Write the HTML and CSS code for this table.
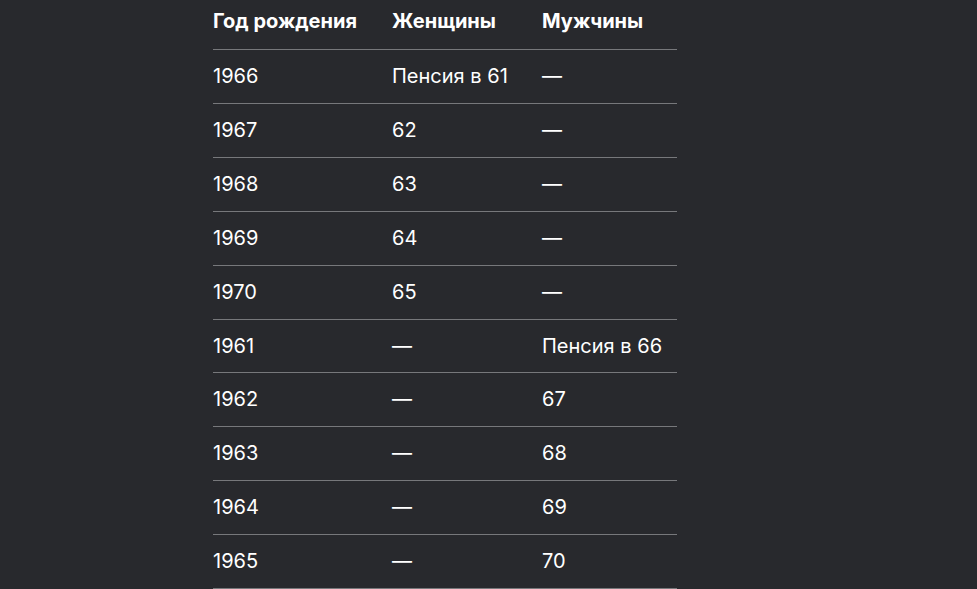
FILE: index.html
```html
<!DOCTYPE html>
<html lang="ru">
<head>
<meta charset="utf-8">
<link rel="stylesheet" href="styles.css">
</head>
<body>
<div class="wrap">
<table class="tbl">
<thead>
<tr><th class="c1">Год рождения</th><th class="c2">Женщины</th><th class="c3">Мужчины</th></tr>
</thead>
<tbody>
<tr><td>1966</td><td>Пенсия в 61</td><td>—</td></tr>
<tr><td>1967</td><td>62</td><td>—</td></tr>
<tr><td>1968</td><td>63</td><td>—</td></tr>
<tr><td>1969</td><td>64</td><td>—</td></tr>
<tr><td>1970</td><td>65</td><td>—</td></tr>
<tr><td>1961</td><td>—</td><td>Пенсия в 66</td></tr>
<tr><td>1962</td><td>—</td><td>67</td></tr>
<tr><td>1963</td><td>—</td><td>68</td></tr>
<tr><td>1964</td><td>—</td><td>69</td></tr>
<tr><td>1965</td><td>—</td><td>70</td></tr>
</tbody>
</table>
</div>
</body>
</html>
```
FILE: styles.css
```css
html, body {
  margin: 0;
  padding: 0;
  background: #28292d;
  height: 100%;
  overflow: hidden;
}
.wrap {
  padding-left: 213px;
}
.tbl {
  border-collapse: collapse;
  width: 464px;
  table-layout: fixed;
  font-family: Inter, "Noto Sans", sans-serif;
  font-size: 20px;
  color: #ffffff;
}
.c1 { width: 179px; }
.c2 { width: 150px; }
.c3 { width: 135px; }
.tbl th {
  text-align: left;
  font-weight: 700;
  line-height: 27px;
  padding: 8px 0 14px 0;
  border-bottom: 1px solid #77787b;
}
.tbl td {
  line-height: 26.9px;
  padding: 13px 0;
  border-bottom: 1px solid #77787b;
  white-space: nowrap;
}
```
